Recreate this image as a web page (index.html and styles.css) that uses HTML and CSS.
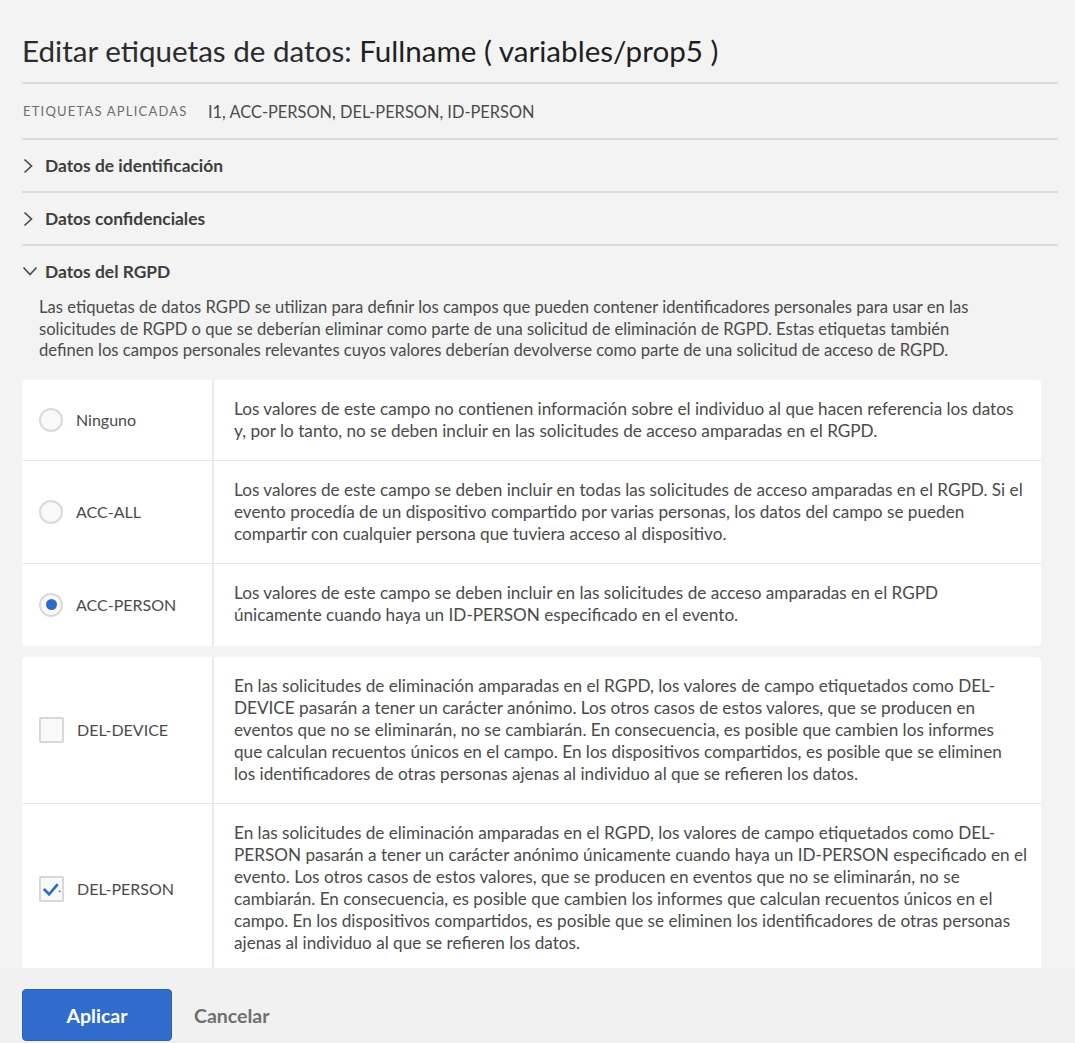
FILE: index.html
```html
<!DOCTYPE html>
<html lang="es">
<head>
<meta charset="utf-8">
<title>Editar etiquetas de datos</title>
<link rel="stylesheet" href="styles.css">
</head>
<body>
<div class="dialog">
  <div class="scroll">
    <h1 class="title">Editar etiquetas de datos: <span class="name">Fullname ( variables/prop5 )</span></h1>
    <div class="applied">
      <span class="applied-label">ETIQUETAS APLICADAS</span>
      <span class="applied-value">I1, ACC-PERSON, DEL-PERSON, ID-PERSON</span>
    </div>
    <div class="section">
      <svg class="chev" width="12" height="16" viewBox="0 0 12 16"><polyline points="2.5,1.5 9.5,8 2.5,14.5" fill="none" stroke="#4b4b4b" stroke-width="1.7"/></svg>
      <span>Datos de identificación</span>
    </div>
    <div class="section">
      <svg class="chev" width="12" height="16" viewBox="0 0 12 16"><polyline points="2.5,1.5 9.5,8 2.5,14.5" fill="none" stroke="#4b4b4b" stroke-width="1.7"/></svg>
      <span>Datos confidenciales</span>
    </div>
    <div class="section open">
      <svg class="chev" width="16" height="12" viewBox="0 0 16 12"><polyline points="1.5,2.5 8,9.5 14.5,2.5" fill="none" stroke="#4b4b4b" stroke-width="1.7"/></svg>
      <span>Datos del RGPD</span>
    </div>
    <p class="intro">Las etiquetas de datos RGPD se utilizan para definir los campos que pueden contener identificadores personales para usar en las<br>solicitudes de RGPD o que se deberían eliminar como parte de una solicitud de eliminación de RGPD. Estas etiquetas también<br>definen los campos personales relevantes cuyos valores deberían devolverse como parte de una solicitud de acceso de RGPD.</p>

    <div class="card">
      <div class="row">
        <div class="opt"><span class="radio"></span><span class="opt-label">Ninguno</span></div>
        <div class="desc">Los valores de este campo no contienen información sobre el individuo al que hacen referencia los datos<br>y, por lo tanto, no se deben incluir en las solicitudes de acceso amparadas en el RGPD.</div>
      </div>
      <div class="row">
        <div class="opt"><span class="radio"></span><span class="opt-label">ACC-ALL</span></div>
        <div class="desc">Los valores de este campo se deben incluir en todas las solicitudes de acceso amparadas en el RGPD. Si el<br>evento procedía de un dispositivo compartido por varias personas, los datos del campo se pueden<br>compartir con cualquier persona que tuviera acceso al dispositivo.</div>
      </div>
      <div class="row">
        <div class="opt"><span class="radio checked"></span><span class="opt-label">ACC-PERSON</span></div>
        <div class="desc">Los valores de este campo se deben incluir en las solicitudes de acceso amparadas en el RGPD<br>únicamente cuando haya un ID-PERSON especificado en el evento.</div>
      </div>
    </div>

    <div class="card">
      <div class="row">
        <div class="opt"><span class="check"></span><span class="opt-label">DEL-DEVICE</span></div>
        <div class="desc">En las solicitudes de eliminación amparadas en el RGPD, los valores de campo etiquetados como DEL-<br>DEVICE pasarán a tener un carácter anónimo. Los otros casos de estos valores, que se producen en<br>eventos que no se eliminarán, no se cambiarán. En consecuencia, es posible que cambien los informes<br>que calculan recuentos únicos en el campo. En los dispositivos compartidos, es posible que se eliminen<br>los identificadores de otras personas ajenas al individuo al que se refieren los datos.</div>
      </div>
      <div class="row">
        <div class="opt"><span class="check"><svg width="22" height="22" viewBox="0 0 22 22"><polyline points="3,11 8.5,16.5 17.5,6" fill="none" stroke="#2d6bc9" stroke-width="2.8"/><circle cx="19.5" cy="13.5" r="1" fill="#2d6bc9"/></svg></span><span class="opt-label">DEL-PERSON</span></div>
        <div class="desc">En las solicitudes de eliminación amparadas en el RGPD, los valores de campo etiquetados como DEL-<br>PERSON pasarán a tener un carácter anónimo únicamente cuando haya un ID-PERSON especificado en el<br>evento. Los otros casos de estos valores, que se producen en eventos que no se eliminarán, no se<br>cambiarán. En consecuencia, es posible que cambien los informes que calculan recuentos únicos en el<br>campo. En los dispositivos compartidos, es posible que se eliminen los identificadores de otras personas<br>ajenas al individuo al que se refieren los datos.</div>
      </div>
    </div>
  </div>
  <div class="footer">
    <button class="btn-primary">Aplicar</button>
    <button class="btn-quiet">Cancelar</button>
  </div>
</div>
</body>
</html>
```

FILE: styles.css
```css
* { box-sizing: border-box; }
html, body { margin: 0; padding: 0; }
body {
  background: #f3f3f3;
  font-family: "Lato", "Open Sans", sans-serif;
  color: #4b4b4b;
  font-size: 16px;
}
.dialog {
  height: 100vh;
  display: flex;
  flex-direction: column;
}
.scroll {
  flex: 1;
  overflow: hidden;
  padding: 0 17px 0 22px;
}
.title {
  margin: 0;
  padding-top: 33px;
  height: 84px;
  font-size: 29.6px;
  line-height: 36px;
  font-weight: 400;
  color: #2c2c2c;
  white-space: nowrap;
  border-bottom: 2px solid #dcdcdc;
}
.title .name { color: #1f1f1f; }
.applied {
  height: 56px;
  display: flex;
  align-items: center;
  border-bottom: 2px solid #dcdcdc;
}
.applied-label {
  font-size: 13px;
  letter-spacing: 1.2px;
  color: #6e6e6e;
  width: 186px;
  padding-left: 1px;
}
.applied-value {
  font-size: 16.4px;
  color: #4b4b4b;
}
.section {
  height: 53px;
  display: flex;
  align-items: center;
  gap: 11px;
  font-weight: 700;
  font-size: 17.4px;
  color: #3e3e3e;
  border-bottom: 2px solid #dcdcdc;
}
.section.open {
  border-bottom: none;
  height: 50px;
  gap: 7px;
}
.intro {
  margin: 0 0 0 17px;
  padding-top: 1px;
  font-size: 16.6px;
  line-height: 21.5px;
  color: #4b4b4b;
  white-space: nowrap;
}
.card {
  margin-top: 18px;
  background: #fff;
  border-radius: 4px;
  width: 1019px;
}
.card + .card { margin-top: 11px; }
.row {
  display: grid;
  grid-template-columns: 192px 1fr;
  border-bottom: 1px solid #e6e6e6;
}
.row:last-child { border-bottom: none; }
.row:last-child .desc { padding-bottom: 20px; }
.opt {
  display: flex;
  align-items: center;
  padding-left: 17px;
  gap: 13px;
  border-right: 2px solid #ebebeb;
}
.opt-label {
  font-size: 16px;
  color: #4b4b4b;
}
.radio {
  width: 24px;
  height: 24px;
  border-radius: 50%;
  border: 2px solid #dadada;
  background: #f9f9f9;
  display: flex;
  align-items: center;
  justify-content: center;
  flex: none;
}
.radio.checked::after {
  content: "";
  width: 11px;
  height: 11px;
  border-radius: 50%;
  background: #2d6bc9;
}
.check {
  width: 25px;
  height: 26px;
  border: 2px solid #d8d8d8;
  border-radius: 2px;
  background: #f9f9f9;
  display: flex;
  align-items: center;
  justify-content: center;
  flex: none;
}
.desc {
  padding: 18px 20px;
  font-size: 17.15px;
  line-height: 22px;
  color: #4b4b4b;
  white-space: nowrap;
}
.footer {
  height: 75px;
  flex: none;
  background: #f1f1f1;
  padding: 21px 0 0 22px;
  display: flex;
  align-items: flex-start;
  gap: 22px;
}
.btn-primary {
  width: 150px;
  height: 52px;
  border: 1px solid #2a60b8;
  border-radius: 4px;
  background: #2f6ccb;
  color: #fff;
  font-family: inherit;
  font-weight: 700;
  font-size: 19.5px;
}
.btn-quiet {
  background: none;
  border: none;
  padding: 0;
  height: 52px;
  font-family: inherit;
  font-weight: 700;
  font-size: 19.5px;
  color: #707070;
}
```
